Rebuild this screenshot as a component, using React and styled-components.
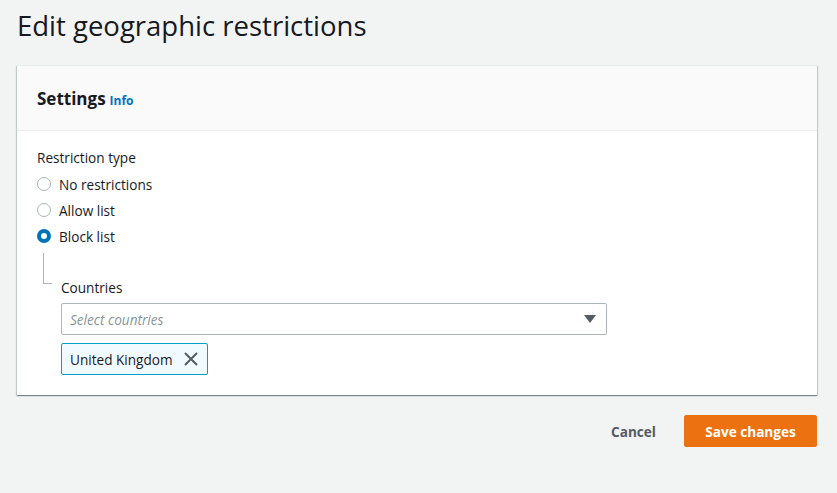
import React, { useState } from 'react';
import styled, { createGlobalStyle } from 'styled-components';

const GlobalStyle = createGlobalStyle`
  html, body {
    margin: 0;
    padding: 0;
    background: #f2f3f3;
    font-family: "Open Sans", "Noto Sans", Arial, sans-serif;
    color: #16191f;
  }
`;

const Page = styled.div`
  padding: 0 20px 0 17px;
  min-height: 493px;
  box-sizing: border-box;
`;

const Title = styled.h1`
  margin: 0;
  padding-top: 8px;
  height: 57px;
  font-size: 27.5px;
  font-weight: 400;
  line-height: 36px;
  color: #16191f;
`;

const Card = styled.div`
  background: #fff;
  box-shadow: 0 1px 1px 0 rgba(0, 28, 36, 0.3), 1px 1px 1px 0 rgba(0, 28, 36, 0.15), -1px 1px 1px 0 rgba(0, 28, 36, 0.15);
  border-top: 1px solid #eaeded;
`;

const CardHeader = styled.div`
  background: #fafafa;
  border-bottom: 1px solid #eaeded;
  height: 64px;
  padding: 0 20px;
  display: flex;
  align-items: center;
`;

const HeaderTitle = styled.h2`
  margin: 0;
  font-size: 17px;
  font-weight: 700;
  color: #16191f;
  display: flex;
  align-items: baseline;
  gap: 4px;
`;

const InfoLink = styled.a`
  font-size: 12px;
  font-weight: 700;
  color: #0073bb;
  text-decoration: none;
`;

const CardBody = styled.div`
  padding: 18px 20px 20px;
`;

const Label = styled.div`
  font-size: 13.6px;
  line-height: 18px;
  color: #16191f;
`;

const RadioGroup = styled.div`
  display: flex;
  flex-direction: column;
  margin-top: 4px;
`;

const RadioRow = styled.label`
  display: flex;
  align-items: center;
  height: 26px;
  gap: 8px;
  font-size: 13.6px;
  color: #16191f;
  cursor: pointer;
`;

const RadioDot = styled.span`
  width: 14px;
  height: 14px;
  box-sizing: border-box;
  border-radius: 50%;
  border: ${(p) => (p.$checked ? '4px solid #0073bb' : '1px solid #aab7b8')};
  background: #fff;
  flex-shrink: 0;
`;

const Nested = styled.div`
  display: flex;
  margin-top: 4px;
`;

const TreeLine = styled.div`
  width: 8px;
  height: 30px;
  margin-left: 6px;
  border-left: 1px solid #aab7b8;
  border-bottom: 1px solid #aab7b8;
  flex-shrink: 0;
`;

const Field = styled.div`
  padding-left: 9px;
  padding-top: 26px;
`;

const FieldLabel = styled(Label)`
  margin-bottom: 6px;
`;

const Select = styled.div`
  width: 546px;
  height: 32px;
  box-sizing: border-box;
  border: 1px solid #aab7b8;
  border-radius: 2px;
  background: #fff;
  display: flex;
  align-items: center;
  justify-content: space-between;
  padding: 0 10px 0 8px;
`;

const Placeholder = styled.span`
  font-size: 13.6px;
  font-style: italic;
  color: #879596;
`;

const Caret = styled.span`
  width: 0;
  height: 0;
  border-left: 6px solid transparent;
  border-right: 6px solid transparent;
  border-top: 8px solid #545b64;
`;

const Token = styled.div`
  margin-top: 8px;
  display: flex;
  width: fit-content;
  align-items: center;
  gap: 11px;
  height: 32px;
  box-sizing: border-box;
  padding: 0 9px 0 8px;
  border: 1px solid #00a1c9;
  border-radius: 2px;
  background: #f1faff;
  font-size: 13.6px;
  color: #16191f;
`;

const Actions = styled.div`
  display: flex;
  justify-content: flex-end;
  align-items: center;
  gap: 28px;
  margin-top: 20px;
`;

const LinkButton = styled.button`
  background: none;
  border: none;
  padding: 0;
  font-family: inherit;
  font-size: 13.6px;
  font-weight: 700;
  color: #545b64;
  cursor: pointer;
`;

const PrimaryButton = styled.button`
  background: #ec7211;
  border: 1px solid #ec7211;
  border-radius: 2px;
  height: 32px;
  width: 133px;
  font-family: inherit;
  font-size: 13.6px;
  font-weight: 700;
  color: #fff;
  cursor: pointer;
`;

const options = ['No restrictions', 'Allow list', 'Block list'];

const App = () => {
  const [type, setType] = useState('Block list');

  return (
    <Page>
      <GlobalStyle />
      <Title>Edit geographic restrictions</Title>
      <Card>
        <CardHeader>
          <HeaderTitle>
            Settings <InfoLink href="#">Info</InfoLink>
          </HeaderTitle>
        </CardHeader>
        <CardBody>
          <Label>Restriction type</Label>
          <RadioGroup>
            {options.map((o) => (
              <RadioRow key={o} onClick={() => setType(o)}>
                <RadioDot $checked={type === o} />
                {o}
              </RadioRow>
            ))}
          </RadioGroup>
          <Nested>
            <TreeLine />
            <Field>
              <FieldLabel>Countries</FieldLabel>
              <Select>
                <Placeholder>Select countries</Placeholder>
                <Caret />
              </Select>
              <Token>
                United Kingdom
                <svg width="14" height="14" viewBox="0 0 14 14">
                  <path d="M1 1 L13 13 M13 1 L1 13" stroke="#545b64" strokeWidth="2" fill="none" />
                </svg>
              </Token>
            </Field>
          </Nested>
        </CardBody>
      </Card>
      <Actions>
        <LinkButton>Cancel</LinkButton>
        <PrimaryButton>Save changes</PrimaryButton>
      </Actions>
    </Page>
  );
};

export default App;
